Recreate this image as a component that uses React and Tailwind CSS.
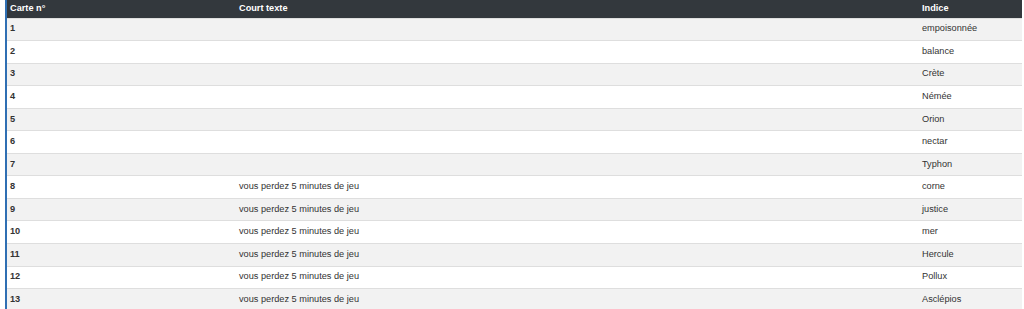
const rows = [
  ['1', '', 'empoisonnée'],
  ['2', '', 'balance'],
  ['3', '', 'Crète'],
  ['4', '', 'Némée'],
  ['5', '', 'Orion'],
  ['6', '', 'nectar'],
  ['7', '', 'Typhon'],
  ['8', 'vous perdez 5 minutes de jeu', 'corne'],
  ['9', 'vous perdez 5 minutes de jeu', 'justice'],
  ['10', 'vous perdez 5 minutes de jeu', 'mer'],
  ['11', 'vous perdez 5 minutes de jeu', 'Hercule'],
  ['12', 'vous perdez 5 minutes de jeu', 'Pollux'],
  ['13', 'vous perdez 5 minutes de jeu', 'Asclépios'],
];

export default function App() {
  return (
    <div className="h-[309px] w-[1024px] overflow-hidden bg-white pl-[5px] pr-[2px]" style={{ fontFamily: '"Liberation Sans", Arial, sans-serif' }}>
      <div className="border-l-2 border-[#2f6fb3]">
        <table className="w-full table-fixed border-collapse text-[9.2px] text-[#333]">
          <thead>
            <tr className="h-[18px] bg-[#33383d] text-white">
              <th className="w-[229px] pl-[3px] text-left font-bold">Carte n°</th>
              <th className="w-[683px] pl-[3px] text-left font-bold">Court texte</th>
              <th className="pl-[3px] text-left font-bold">Indice</th>
            </tr>
          </thead>
          <tbody>
            {rows.map(([n, txt, hint], i) => (
              <tr key={n} className={`h-[22.55px] border-t border-[#dedede] ${i % 2 === 0 ? 'bg-[#f2f2f2]' : 'bg-white'}`}>
                <td className="pl-[3px] font-bold">{n}</td>
                <td className="pl-[3px]">{txt}</td>
                <td className="pl-[3px]">{hint}</td>
              </tr>
            ))}
          </tbody>
        </table>
      </div>
    </div>
  );
}
